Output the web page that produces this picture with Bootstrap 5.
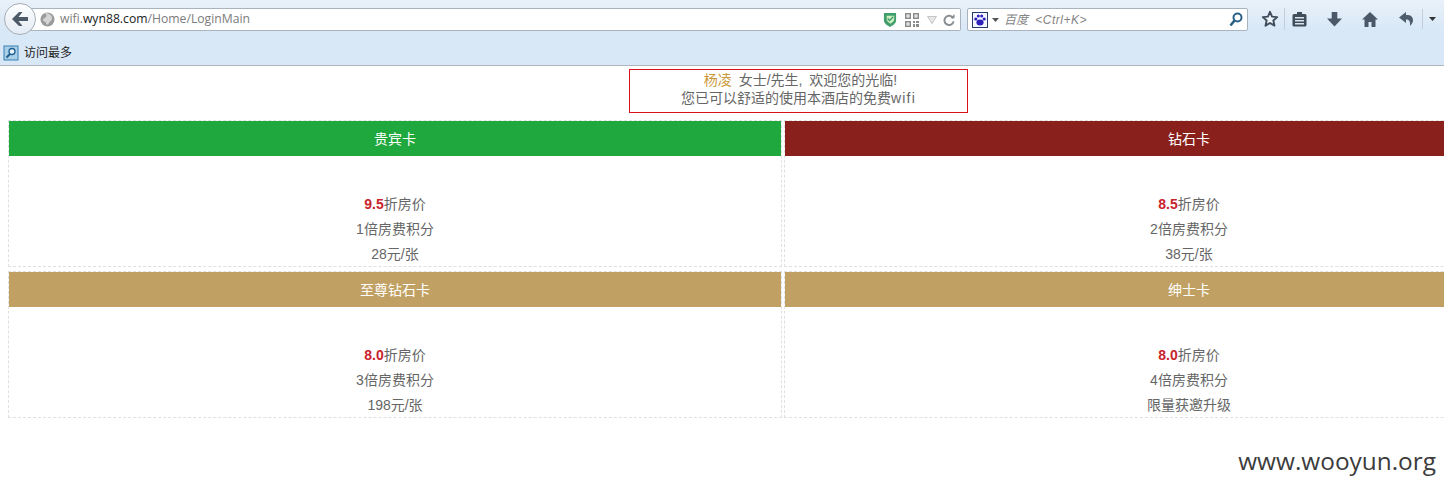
<!DOCTYPE html>
<html lang="zh-CN">
<head>
<meta charset="utf-8">
<title>LoginMain</title>
<link href="https://cdn.jsdelivr.net/npm/bootstrap@5.3.0/dist/css/bootstrap.min.css" rel="stylesheet">
<style>
html,body{height:490px;overflow:hidden;background:#fff}
body{font-family:"Liberation Sans","Noto Sans CJK SC",sans-serif;font-size:14px;color:#666;position:relative}
.chrome{height:66px;background:linear-gradient(#e9f1f9,#d9e8f7 45%,#d9e8f7);border-bottom:1px solid #aeb6bd}
.toolrow{height:38px;position:relative;padding:8px 0 0 30px}
.backbtn{position:absolute;left:4px;top:3px;width:32px;height:32px;border-radius:50%;background:linear-gradient(#fdfdfe,#e4ecf4);border:1px solid #a5adb6;z-index:2}
.urlbar{width:931px;height:23px;background:#fff;border:1px solid #aab4be;border-left:0;border-radius:0 2px 2px 0;padding-left:10px;font-size:12.2px;color:#7c7c7c;font-family:"Open Sans","Liberation Sans",sans-serif}
.urlbar b{font-weight:400;color:#222}
.addr{margin-left:5px}
.urlicons{padding-right:5px}
.gap8{margin-left:8px}
.gap6{margin-left:6px}
.searchbar{width:281px;height:23px;margin-left:6px;background:#fff;border:1px solid #aab4be;border-radius:2px;padding:0 4px 0 4px;font-size:12px;font-style:italic;color:#858585}
.hintword{margin-left:5px;word-spacing:4px}
.hintkey{letter-spacing:.5px}
.tools{margin-left:13px}
.t5{margin-left:5px}
.t6{margin-left:6px}
.t7{margin-left:7px}
.t8{margin-left:8px}
.t20{margin-left:20px}
.t21{margin-left:21px}
.bookrow{height:27px;padding:2px 0 0 3px;font-size:12px;color:#222;gap:5px}
.notice{width:339px;height:44px;margin:3px 0 0 629px;border:1px solid #d8131f;line-height:18px;padding-top:1px;text-align:center}
.welcome{word-spacing:3px;padding-left:4px}
.wifi{letter-spacing:1.2px}
.guest{color:#cb9a3c}
.cardgrid{display:grid;grid-template-columns:774px 810px;gap:4px 2px;margin:7px 0 0 8px;width:1600px}
.vip{border:1px dashed #e0e0e0;height:147px;text-align:center}
.viphead{height:35px;line-height:36px;color:#fff;font-size:14px}
.vipbody{padding-top:36px;line-height:25px}
.vipbody em{font-style:normal;font-weight:700;color:#c9242c;font-size:14px}
.h-green{background:#1fa83d}
.h-red{background:#8a201b}
.h-gold{background:#c1a163}
.mark-wm{position:absolute;right:8px;top:446px;font-size:24.4px;line-height:30px;color:#3c3c3c;font-family:"Open Sans","Liberation Sans",sans-serif}
</style>
</head>
<body>
<div class="chrome">
  <div class="toolrow d-flex align-items-start">
    <div class="backbtn d-flex align-items-center justify-content-center">
      <svg width="16" height="14" viewBox="0 0 16 14"><path d="M7 0 0 7l7 7h3.500L6.500 9H16V5H6.500l4-5z" fill="#4d5b69"/></svg>
    </div>
    <div class="urlbar d-flex align-items-center">
      <svg width="15" height="15" viewBox="0 0 15 15"><circle cx="7.500" cy="7.500" r="7" fill="#9a9a9a"/><path d="M4 2c3 0 3 2 2 3S3 6 3 8s3 1 3 3 2 2 3 0 3-2 3-5-3-4-5-5z" fill="#d4d4d4"/></svg>
      <span class="addr">wifi.<b>wyn88.com</b>/Home/LoginMain</span>
      <span class="urlicons ms-auto d-flex align-items-center">
        <svg width="14" height="15" viewBox="0 0 15 16"><path d="M1 1h13v8c0 3-3 5-6.500 7C4 14 1 12 1 9z" fill="#3f9e6c"/><path d="M4 4h8v4c0 2-2 3-4 4.500C6 11 4 10 4 8z" fill="#cfeec0"/><path d="m5 7 2 2 4-4" stroke="#3f9e6c" stroke-width="1.500" fill="none"/></svg>
        <svg class="gap8" width="14" height="14" viewBox="0 0 14 14" fill="#8a8a8a"><path d="M0 0h6v6H0zM1.500 1.500v3h3v-3zM8 0h6v6H8zM9.500 1.500v3h3v-3zM0 8h6v6H0zM1.500 9.500v3h3v-3zM8 8h2v2H8zM11 8h3v2h-3zM8 11h2v3H8zM11 11h3v3h-3zM2.500 2.500h1v1h-1zM10.500 2.500h1v1h-1zM2.500 10.500h1v1h-1z" fill-rule="evenodd"/></svg>
        <svg class="gap8" width="10" height="8" viewBox="0 0 11 9"><path d="M.5.500h10L5.500 8.500z" fill="#e8e8e8" stroke="#bbb"/></svg>
        <svg class="gap6" width="12" height="12" viewBox="0 0 13 13"><path d="M11 4.500A5 5 0 1 0 11.500 8" fill="none" stroke="#8a8f94" stroke-width="2.200"/><path d="M8 4.500h4.500V0z" fill="#8a8f94"/></svg>
      </span>
    </div>
    <div class="searchbar d-flex align-items-center">
      <svg width="16" height="16" viewBox="0 0 16 16"><rect x=".5" y=".5" width="15" height="15" fill="#f4f6ff" stroke="#243a70"/><g fill="#2a1fb8"><ellipse cx="8" cy="10.500" rx="3.600" ry="3"/><circle cx="3.800" cy="7" r="1.600"/><circle cx="12.200" cy="7" r="1.600"/><circle cx="6.300" cy="4" r="1.500"/><circle cx="9.700" cy="4" r="1.500"/></g></svg>
      <svg class="ms-1" width="7" height="4" viewBox="0 0 7 4"><path d="M0 0h7L3.500 4z" fill="#555"/></svg>
      <span class="hintword">百度 <span class="hintkey">&lt;Ctrl+K&gt;</span></span>
      <svg class="ms-auto" width="14" height="15" viewBox="0 0 14 15"><circle cx="8.500" cy="5.500" r="4" fill="none" stroke="#2c6187" stroke-width="2"/><path d="M5.500 8.500 1.500 13.500" stroke="#2c6187" stroke-width="2.600"/></svg>
    </div>
    <div class="tools d-flex align-items-center">
      <svg width="18" height="18" viewBox="0 0 20 20"><path d="m10 2 2.300 5.300 5.700.6-4.300 3.800 1.300 5.700-5-3-5 3 1.300-5.700L2 7.900l5.700-.6z" fill="#fff" fill-opacity=".4" stroke="#3f4c59" stroke-width="2.100" stroke-linejoin="round"/></svg>
      <svg class="t5" width="1" height="22"><rect width="1" height="22" fill="#c3ced9"/></svg>
      <svg class="t7" width="15" height="16" viewBox="0 0 15 16"><path d="M2 3h3V1h5v2h3q1.500 0 1.500 1.500V14q0 1.500-1.500 1.500H2Q.5 15.500.5 14V4.500Q.5 3 2 3z" fill="#3f4c59"/><path d="M3 6h9v1.400H3zM3 9h9v1.400H3zM3 12h9v1.400H3z" fill="#d9e3ee"/></svg>
      <svg class="t20" width="15" height="15" viewBox="0 0 16 16"><path d="M5 0h6v7h5l-8 8.500L0 7h5z" fill="#4a5867"/></svg>
      <svg class="t20" width="16" height="15" viewBox="0 0 16 15"><path d="M8 0 0 7.500h2.500V15h4v-5h3v5h4V7.500H16z" fill="#4a5867"/></svg>
      <svg class="t21" width="15" height="15" viewBox="0 0 15 15"><path d="M7 0 0 5.500 7 11V7.500c3 0 4.500 1.500 4 6.500 3-3 4-6 2-9-1.500-2-3.500-2-6-2z" fill="#4f5e6e"/></svg>
      <svg class="t8" width="1" height="20"><rect width="1" height="20" fill="#c3ced9"/></svg>
      <svg class="t6" width="7" height="4" viewBox="0 0 7 4"><path d="M0 0h7L3.500 4z" fill="#333"/></svg>
    </div>
  </div>
  <div class="bookrow d-flex align-items-center">
    <svg width="16" height="16" viewBox="0 0 16 16"><rect x="1" y="1" width="14" height="14" fill="#a9cfe9" stroke="#3b7fb0"/><circle cx="9" cy="6.500" r="3" fill="#e8f4fb" stroke="#1f5f90" stroke-width="1.300"/><path d="M7 9 3.500 12.500" stroke="#1f5f90" stroke-width="2"/></svg>
    <span>访问最多</span>
  </div>
</div>

<div class="notice">
  <div class="welcome"><span class="guest">杨凌</span> 女士/先生, 欢迎您的光临!</div>
  <div>您已可以舒适的使用本酒店的免费<span class="wifi">wifi</span></div>
</div>

<div class="cardgrid">
  <div class="vip"><div class="viphead h-green">贵宾卡</div><div class="vipbody"><div><em>9.5</em>折房价</div><div>1倍房费积分</div><div>28元/张</div></div></div>
  <div class="vip"><div class="viphead h-red">钻石卡</div><div class="vipbody"><div><em>8.5</em>折房价</div><div>2倍房费积分</div><div>38元/张</div></div></div>
  <div class="vip"><div class="viphead h-gold">至尊钻石卡</div><div class="vipbody"><div><em>8.0</em>折房价</div><div>3倍房费积分</div><div>198元/张</div></div></div>
  <div class="vip"><div class="viphead h-gold">绅士卡</div><div class="vipbody"><div><em>8.0</em>折房价</div><div>4倍房费积分</div><div>限量获邀升级</div></div></div>
</div>

<div class="mark-wm">www.wooyun.org</div>
</body>
</html>
